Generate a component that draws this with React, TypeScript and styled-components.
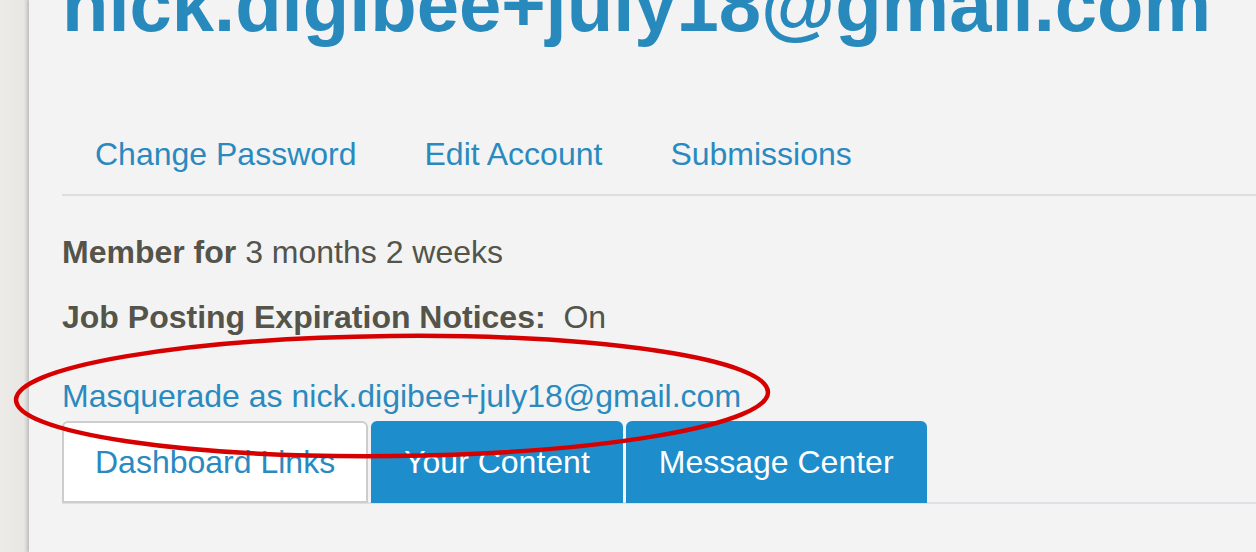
import React from 'react';
import styled, { createGlobalStyle } from 'styled-components';

const GlobalStyle = createGlobalStyle`
  html, body {
    margin: 0;
    padding: 0;
    background: #ebe9e6;
    overflow: hidden;
  }
  * {
    box-sizing: border-box;
  }
`;

const Page = styled.div`
  position: relative;
  display: flex;
  width: 1256px;
  height: 552px;
  overflow: hidden;
  font-family: 'Liberation Sans', Arial, Helvetica, sans-serif;
`;

const Gutter = styled.div`
  width: 29px;
  flex-shrink: 0;
  background: linear-gradient(90deg, #edebe8 0%, #e9e7e4 80%, #d9d7d4 100%);
`;

const Panel = styled.main`
  flex: 1;
  background: #f3f3f3;
  padding-left: 33px;
  box-shadow: -2px 0 3px rgba(0, 0, 0, 0.12);
`;

const Title = styled.h1`
  margin: -33px 0 0;
  font-size: 76px;
  line-height: 76px;
  font-weight: 700;
  color: #2889bd;
  white-space: nowrap;
`;

const Nav = styled.ul`
  display: flex;
  margin: 71px 0 0;
  padding: 0;
  list-style: none;
  border-bottom: 2px solid #dcdfe2;
`;

const NavLink = styled.a`
  display: block;
  padding: 16px 35px 16px 33px;
  font-size: 32px;
  line-height: 48px;
  color: #2a8abf;
  text-decoration: none;
`;

const Field = styled.div<{ $top: number }>`
  margin-top: ${(p) => p.$top}px;
  font-size: 32px;
  line-height: 48px;
  color: #54544a;
  white-space: nowrap;
`;

const Label = styled.strong`
  font-weight: 700;
`;

const Masquerade = styled.a`
  display: block;
  margin-top: 31px;
  font-size: 32px;
  line-height: 48px;
  color: #2a8abf;
  text-decoration: none;
  white-space: nowrap;
`;

const Tabs = styled.ul`
  display: flex;
  gap: 3px;
  margin: 1px 0 0;
  padding: 0;
  list-style: none;
  border-bottom: 2px solid #dde0e4;
`;

const Tab = styled.li<{ $active?: boolean }>`
  margin-bottom: -1px;
  padding: 15px 31px;
  font-size: 32px;
  line-height: 48px;
  border: 2px solid ${(p) => (p.$active ? '#cdcdcd' : '#1e8dcc')};
  border-radius: 6px 6px 0 0;
  background: ${(p) => (p.$active ? '#ffffff' : '#1e8dcc')};
  color: ${(p) => (p.$active ? '#2a8abf' : '#ffffff')};
  white-space: nowrap;
`;

const Annotation = styled.svg`
  position: absolute;
  left: 0;
  top: 0;
  pointer-events: none;
`;

export default function App() {
  return (
    <>
      <GlobalStyle />
      <Page>
        <Gutter />
        <Panel>
          <Title>nick.digibee+july18@gmail.com</Title>
          <Nav>
            <li><NavLink>Change Password</NavLink></li>
            <li><NavLink>Edit Account</NavLink></li>
            <li><NavLink>Submissions</NavLink></li>
          </Nav>
          <Field $top={32}>
            <Label>Member for</Label> 3 months 2 weeks
          </Field>
          <Field $top={17}>
            <Label>Job Posting Expiration Notices:</Label>{'\u00a0 '}On
          </Field>
          <Masquerade>Masquerade as nick.digibee+july18@gmail.com</Masquerade>
          <Tabs>
            <Tab $active>Dashboard Links</Tab>
            <Tab>Your Content</Tab>
            <Tab>Message Center</Tab>
          </Tabs>
        </Panel>
        <Annotation width="1256" height="552" viewBox="0 0 1256 552">
          <ellipse
            cx="392"
            cy="396"
            rx="376"
            ry="60"
            transform="rotate(-0.6 392 396)"
            fill="none"
            stroke="#d60000"
            strokeWidth="4.5"
          />
        </Annotation>
      </Page>
    </>
  );
}
